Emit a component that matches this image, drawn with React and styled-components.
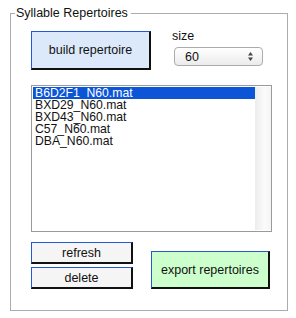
import React, { useState } from "react";
import styled, { createGlobalStyle } from "styled-components";

////////////////////////////////////////////////////////////////////////////////////////////
// Estilos

const GlobalStyle = createGlobalStyle`
  html, body {
    margin: 0;
    padding: 0;
    background: #ffffff;
    font-family: "Liberation Sans", Arial, sans-serif;
    color: #111;
  }
`;

const Page = styled.div`
  width: 296px;
  height: 318px;
  box-sizing: border-box;
  padding: 6px 8px 0 10px;
`;

const Panel = styled.fieldset`
  margin: 0;
  width: 278px;
  height: 305px;
  box-sizing: border-box;
  border: 1px solid #acacac;
  padding: 0;
`;

const Title = styled.legend`
  font-size: 12.5px;
  line-height: 14px;
  padding: 0 3px 0 1px;
  margin-left: 4px;
  color: #111;
`;

const Body = styled.div`
  display: flex;
  flex-direction: column;
  padding: 11px 14px 0 20px;
`;

const TopRow = styled.div`
  display: flex;
  align-items: flex-start;
`;

const Button = styled.button`
  box-sizing: border-box;
  width: ${(p) => p.$w}px;
  height: ${(p) => p.$h}px;
  background: ${(p) => p.$bg || "#f5f5f5"};
  border-style: solid;
  border-width: 1px 2px 2px 1px;
  border-color: #2459d3 #111 #111 #2459d3;
  font-family: "Liberation Sans", Arial, sans-serif;
  font-size: 12.5px;
  color: #111;
  padding: 0;
  margin: 0;
  cursor: pointer;
`;

const SizeGroup = styled.div`
  display: flex;
  flex-direction: column;
  margin-left: 19px;
  margin-top: -3px;
`;

const Label = styled.span`
  font-size: 12.5px;
  line-height: 16px;
  margin-left: 2px;
`;

const Select = styled.div`
  box-sizing: border-box;
  margin-top: 3px;
  margin-left: 4px;
  width: 89px;
  height: 19px;
  border: 1px solid #ababab;
  border-radius: 4px;
  background: linear-gradient(#ffffff, #ebebeb);
  display: flex;
  align-items: center;
  justify-content: space-between;
  padding: 0 8px 0 10px;
  font-size: 12.5px;
`;

const ListBox = styled.div`
  box-sizing: border-box;
  margin-top: 15px;
  width: 241px;
  height: 147px;
  border: 1px solid #9a9a9a;
  padding: 1px 0 1px 1px;
  display: flex;
`;

const Items = styled.ul`
  list-style: none;
  margin: 0;
  padding: 0;
  flex: 1;
`;

const Item = styled.li`
  font-size: 12.2px;
  line-height: 12px;
  height: 12px;
  padding-left: 2px;
  background: ${(p) => (p.$selected ? "#0b55d6" : "transparent")};
  color: ${(p) => (p.$selected ? "#ffffff" : "#111")};
  white-space: nowrap;
`;

const ScrollTrack = styled.div`
  width: 16px;
  background: linear-gradient(to right, #ececec, #fbfbfb 60%, #f4f4f4);
`;

const BottomRow = styled.div`
  display: flex;
  align-items: flex-end;
  margin-top: 10px;
  gap: 18px;
`;

const ButtonColumn = styled.div`
  display: flex;
  flex-direction: column;
  gap: 3px;
`;

////////////////////////////////////////////////////////////////////////////////////////////

const files = [
  "B6D2F1_N60.mat",
  "BXD29_N60.mat",
  "BXD43_N60.mat",
  "C57_N60.mat",
  "DBA_N60.mat",
];

function Arrows() {
  return (
    <svg width="7" height="11" viewBox="0 0 7 11">
      <path d="M3.5 1 L6 4.5 L1 4.5 Z" fill="#444" />
      <path d="M3.5 10 L6 6.5 L1 6.5 Z" fill="#444" />
    </svg>
  );
}

export default function App() {
  const [selected, setSelected] = useState(0);

  return (
    <Page>
      <GlobalStyle />
      <Panel>
        <Title>Syllable Repertoires</Title>
        <Body>
          <TopRow>
            <Button $w={120} $h={39} $bg="#dce9fb">
              build repertoire
            </Button>
            <SizeGroup>
              <Label>size</Label>
              <Select>
                <span>60</span>
                <Arrows />
              </Select>
            </SizeGroup>
          </TopRow>
          <ListBox>
            <Items>
              {files.map((f, i) => (
                <Item key={f} $selected={i === selected} onClick={() => setSelected(i)}>
                  {f}
                </Item>
              ))}
            </Items>
            <ScrollTrack />
          </ListBox>
          <BottomRow>
            <ButtonColumn>
              <Button $w={102} $h={22}>refresh</Button>
              <Button $w={102} $h={22}>delete</Button>
            </ButtonColumn>
            <Button $w={119} $h={38} $bg="#ccffcc">
              export repertoires
            </Button>
          </BottomRow>
        </Body>
      </Panel>
    </Page>
  );
}
